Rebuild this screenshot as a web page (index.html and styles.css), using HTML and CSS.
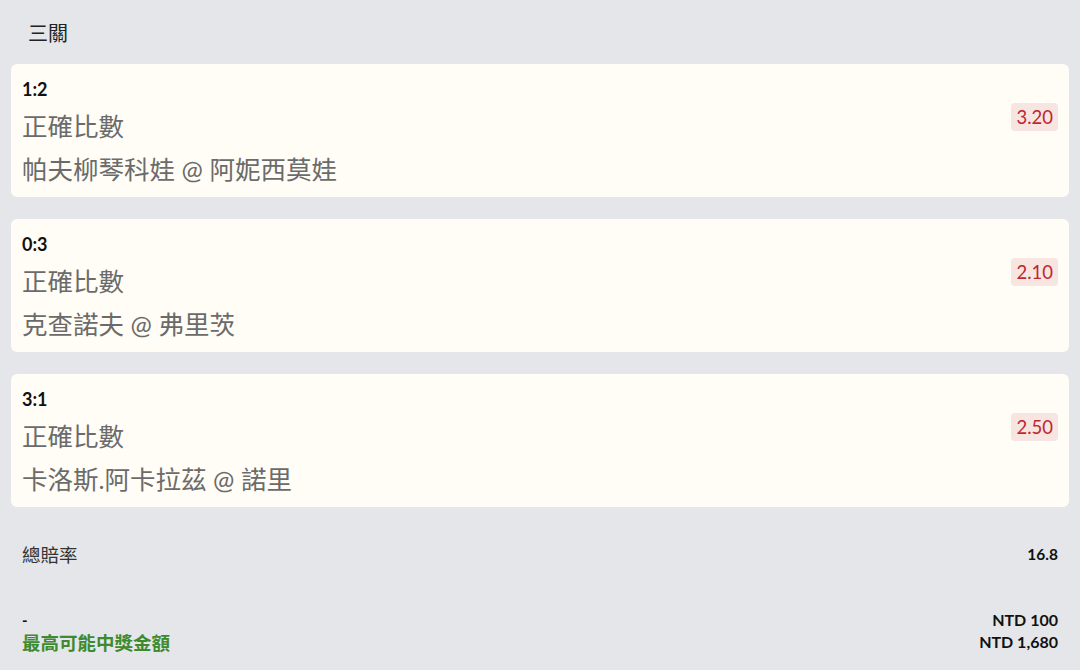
FILE: index.html
```html
<!DOCTYPE html>
<html lang="zh-Hant">
<head>
    <meta charset="UTF-8">
    <meta name="viewport" content="width=device-width, initial-scale=1.0">
    <title>三關</title>
    <link rel="stylesheet" href="styles.css">
</head>
<body>
    <div class="slip">
        <div class="slip-title">三關</div>

        <div class="bet-card">
            <div class="bet-info">
                <div class="bet-score">1:2</div>
                <div class="bet-market">正確比數</div>
                <div class="bet-match">帕夫柳琴科娃 @ 阿妮西莫娃</div>
            </div>
            <div class="bet-odds">3.20</div>
        </div>

        <div class="bet-card">
            <div class="bet-info">
                <div class="bet-score">0:3</div>
                <div class="bet-market">正確比數</div>
                <div class="bet-match">克查諾夫 @ 弗里茨</div>
            </div>
            <div class="bet-odds">2.10</div>
        </div>

        <div class="bet-card">
            <div class="bet-info">
                <div class="bet-score">3:1</div>
                <div class="bet-market">正確比數</div>
                <div class="bet-match">卡洛斯.阿卡拉茲 @ 諾里</div>
            </div>
            <div class="bet-odds">2.50</div>
        </div>

        <div class="summary-row">
            <div class="summary-label">總賠率</div>
            <div class="summary-value">16.8</div>
        </div>

        <div class="payout-row">
            <div class="payout-left">
                <div class="payout-stake">-</div>
                <div class="payout-label">最高可能中獎金額</div>
            </div>
            <div class="payout-right">
                <div>NTD 100</div>
                <div>NTD 1,680</div>
            </div>
        </div>
    </div>
</body>
</html>
```

FILE: styles.css
```css
body, html {
    margin: 0;
    padding: 0;
    height: 100%;
    background-color: #e4e6e9;
    font-family: Lato, "Noto Sans CJK TC", sans-serif;
}
.slip {
    padding: 0 11px;
}
.slip-title {
    font-family: "Noto Sans CJK TC", sans-serif;
    font-size: 20px;
    color: #222;
    padding: 18px 0 0 17px;
    height: 64px;
    box-sizing: border-box;
    line-height: 30px;
}
.bet-card {
    display: flex;
    justify-content: space-between;
    background-color: #fffdf5;
    border-radius: 6px;
    padding: 10px 11px 7px 11px;
    margin-bottom: 22px;
}
.bet-info {
    display: flex;
    flex-direction: column;
}
.bet-score {
    font-size: 18px;
    font-weight: bold;
    color: #111;
    line-height: 30px;
}
.bet-market, .bet-match {
    font-family: Lato, "Noto Sans CJK TC", sans-serif;
    font-size: 25.5px;
    color: #6b6b6b;
}
.bet-market {
    line-height: 44px;
}
.bet-match {
    line-height: 42px;
}
.bet-odds {
    align-self: flex-start;
    margin-top: 29px;
    background-color: #f6e5e1;
    color: #c0282d;
    font-size: 18.5px;
    line-height: 28px;
    padding: 0 5px;
    border-radius: 4px;
}
.summary-row {
    display: flex;
    justify-content: space-between;
    align-items: center;
    padding: 0 11px;
    margin-top: 24px;
    height: 46px;
}
.summary-label {
    font-family: "Noto Sans CJK TC", sans-serif;
    font-size: 18.5px;
    color: #333;
}
.summary-value {
    font-size: 15.5px;
    font-weight: bold;
    color: #111;
}
.payout-row {
    display: flex;
    justify-content: space-between;
    align-items: flex-end;
    padding: 0 11px;
    margin-top: 32px;
    line-height: 22px;
}
.payout-stake {
    font-size: 15px;
    font-weight: bold;
    color: #111;
}
.payout-label {
    font-family: "Noto Sans CJK TC", sans-serif;
    font-size: 18.5px;
    font-weight: bold;
    color: #3f8a2e;
}
.payout-right {
    text-align: right;
    font-size: 16px;
    font-weight: bold;
    color: #111;
}
```
